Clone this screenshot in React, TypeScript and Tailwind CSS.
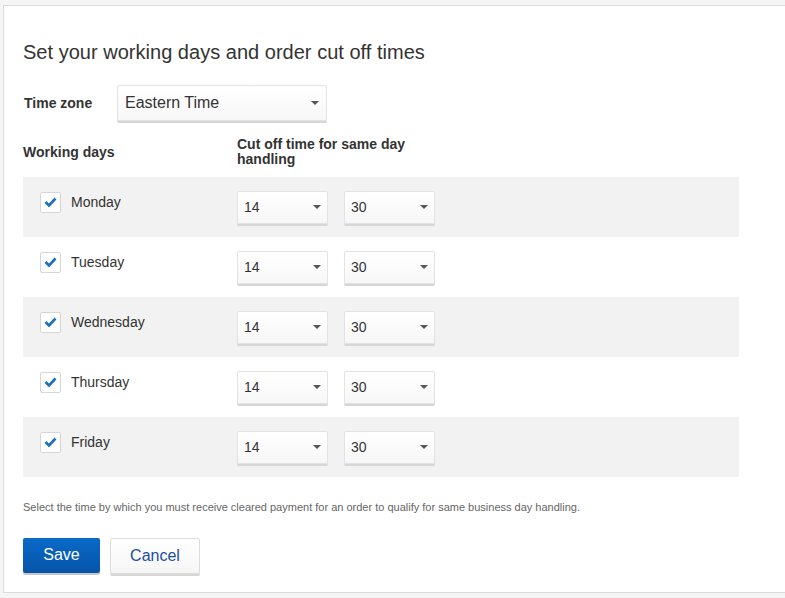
import { useState } from 'react'

const days = ['Monday', 'Tuesday', 'Wednesday', 'Thursday', 'Friday']

// small caret used in all the selects
const Caret = () => (
    <svg width="8" height="4" viewBox="0 0 8 4" className="shrink-0">
        <path d="M0 0 L8 0 L4 4 Z" fill="#555" />
    </svg>
)

const Select = ({ value, className, textClass }: { value: string, className: string, textClass: string }) => (
    <div className={`flex items-center justify-between border border-[#e3e3e3] rounded-[2px] bg-gradient-to-b from-white to-[#f7f7f7] shadow-[0_2px_0_#d6d6d6] ${className}`}>
        <span className={`text-[#333] ${textClass}`}>{value}</span>
        <Caret />
    </div>
)

const Check = ({ on, toggle }: { on: boolean, toggle: () => void }) => (
    <button onClick={toggle} className="w-[21px] h-[21px] flex items-center justify-center bg-white border border-[#d6d6d6] rounded-[2px]">
        {on && <svg width="13" height="10" viewBox="0 0 13 10">
            <path d="M1.5 5 L5 8.5 L11.5 1.5" stroke="#1a6fc4" strokeWidth="2.6" fill="none" />
        </svg>}
    </button>
)

const App = () => {
    const [checked, setChecked] = useState<boolean[]>(days.map(() => true))

    return <div className="w-[785px] h-[598px] bg-[#f5f5f5] pt-[5px] pl-[3px] overflow-hidden" style={{ fontFamily: '"Liberation Sans", Arial, sans-serif' }}>
        <div className="w-[800px] h-[588px] bg-white border border-[#dcdcdc] pl-[19px] pt-[34px]">
            <h1 className="text-[20px] text-[#333] leading-[24px] tracking-[0.02px]">Set your working days and order cut off times</h1>

            <div className="flex items-center mt-[21px]">
                <div className="w-[94px] text-[14px] font-bold text-[#333] pl-px">Time zone</div>
                <Select value="Eastern Time" className="w-[210px] h-[36px] pl-[7px] pr-[7px]" textClass="text-[16px]" />
            </div>

            <div className="flex mt-[16px] text-[14px] font-bold text-[#333] leading-[15px]">
                <div className="w-[214px] pt-[8px]">Working days</div>
                <div className="w-[180px]">Cut off time for same day handling</div>
            </div>

            <div className="mt-[10px] w-[716px]">
                {days.map((d, i) => <div key={d} className={`h-[60px] flex items-center ${i % 2 === 0 ? 'bg-[#f2f2f2]' : 'bg-white'}`}>
                    <div className="w-[214px] flex items-center pl-[17px] -mt-[10px]">
                        <Check on={checked[i]} toggle={() => setChecked(c => c.map((v, j) => j === i ? !v : v))} />
                        <span className="ml-[10px] text-[14px] text-[#333]">{d}</span>
                    </div>
                    <Select value="14" className="w-[91px] h-[33px] pl-[6px] pr-[6px]" textClass="text-[14px]" />
                    <Select value="30" className="w-[91px] h-[33px] pl-[6px] pr-[6px] ml-[16px]" textClass="text-[14px]" />
                </div>)}
            </div>

            <p className="mt-[22px] text-[11px] text-[#666]">Select the time by which you must receive cleared payment for an order to qualify for same business day handling.</p>

            <div className="flex gap-[10px] mt-[22px]">
                <button className="w-[77px] h-[35px] rounded-[2px] bg-gradient-to-b from-[#0a6ac8] to-[#0654a8] text-white text-[16px] shadow-[0_2px_0_#c8c8c8]">Save</button>
                <button className="w-[90px] h-[36px] rounded-[2px] border border-[#dcdcdc] bg-gradient-to-b from-white to-[#f6f6f6] text-[#1b4f9c] text-[16px] shadow-[0_2px_0_#d6d6d6]">Cancel</button>
            </div>
        </div>
    </div>
}

export default App
